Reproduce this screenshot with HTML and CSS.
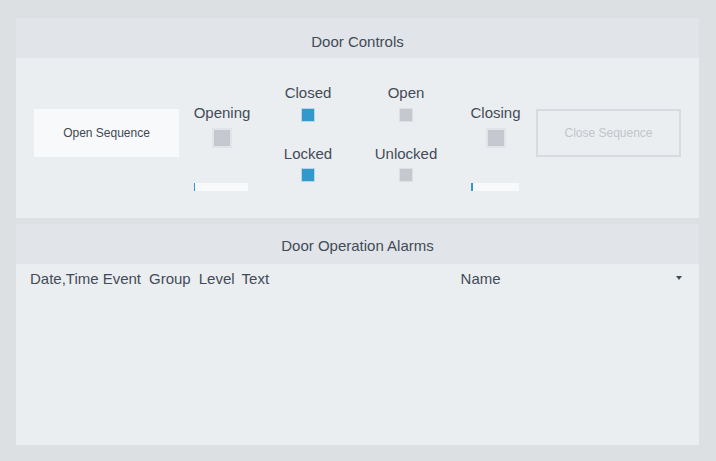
FILE: index.html
```html
<!DOCTYPE html>
<html lang="en">
<head>
<meta charset="utf-8">
<title>Door</title>
<link rel="stylesheet" href="styles.css">
</head>
<body>
<div class="page">
  <section class="panel">
    <div class="panel-header header-controls">Door Controls</div>
    <div class="controls">
      <button class="seq-btn">Open Sequence</button>
      <div class="motion motion-opening">
        <div class="label">Opening</div>
        <div class="lamp lamp-lg"></div>
        <div class="progress progress-opening"><div class="progress-fill" style="width:1px"></div></div>
      </div>
      <div class="status status-closed">
        <div class="label">Closed</div>
        <div class="lamp lamp-sm lamp-on"></div>
        <div class="label label-second">Locked</div>
        <div class="lamp lamp-sm lamp-on lamp-second"></div>
      </div>
      <div class="status status-open">
        <div class="label">Open</div>
        <div class="lamp lamp-sm"></div>
        <div class="label label-second">Unlocked</div>
        <div class="lamp lamp-sm lamp-second"></div>
      </div>
      <div class="motion motion-closing">
        <div class="label">Closing</div>
        <div class="lamp lamp-lg"></div>
        <div class="progress progress-closing"><div class="progress-fill" style="width:2px"></div></div>
      </div>
      <button class="seq-btn seq-btn-disabled" disabled>Close Sequence</button>
    </div>
  </section>
  <section class="panel panel-alarms">
    <div class="panel-header header-alarms">Door Operation Alarms</div>
    <div class="alarms">
      <div class="alarm-head">
        <span class="col col-date">Date,Time</span>
        <span class="col col-event">Event</span>
        <span class="col col-group">Group</span>
        <span class="col col-level">Level</span>
        <span class="col col-text">Text</span>
        <span class="col col-name">Name</span>
        <span class="caret"></span>
      </div>
    </div>
  </section>
</div>
</body>
</html>
```
FILE: styles.css
```css
html, body {
  margin: 0;
  padding: 0;
}
body {
  background: #dde0e3;
  font-family: "Liberation Sans", Arial, sans-serif;
  color: #434b57;
}
.page {
  padding: 18px 17px 16px 16px;
}
.panel {
  display: flex;
  flex-direction: column;
}
.panel-alarms {
  margin-top: 6px;
}
.panel-header {
  box-sizing: border-box;
  height: 40px;
  background: #e1e4e8;
  text-align: center;
  font-size: 15px;
  line-height: 17px;
}
.header-controls {
  padding-top: 15px;
}
.header-alarms {
  padding-top: 13px;
}
.controls {
  box-sizing: border-box;
  height: 160px;
  background: #ebeef1;
  display: flex;
  align-items: flex-start;
  padding-left: 18px;
}
.seq-btn {
  box-sizing: border-box;
  width: 145px;
  height: 48px;
  margin-top: 51px;
  background: #f7f9fb;
  border: 0;
  font-family: "Liberation Sans", Arial, sans-serif;
  font-size: 12px;
  color: #3f4752;
  padding: 0;
}
.seq-btn-disabled {
  margin-left: 16px;
  background: transparent;
  border: 2px solid #d7dade;
  color: #c2c5c9;
}
.label {
  font-size: 15px;
  line-height: 17px;
  white-space: nowrap;
}
.motion {
  display: flex;
  flex-direction: column;
  align-items: center;
  margin-top: 46px;
}
.motion-opening {
  margin-left: 15px;
  width: 56px;
}
.motion-closing {
  margin-left: 33px;
  width: 49px;
}
.lamp {
  box-sizing: border-box;
  background: #c5c9cf;
}
.lamp-lg {
  width: 20px;
  height: 20px;
  border: 2px solid #e1e4e8;
  margin-top: 7px;
}
.lamp-sm {
  width: 14px;
  height: 14px;
  border: 1px solid #dcdfe3;
  margin-top: 7px;
}
.lamp-on {
  background: #3399cc;
  border-color: #b9d6e8;
}
.lamp-second {
  margin-top: 6px;
}
.progress {
  align-self: flex-start;
  height: 8px;
  background: #f7f9fb;
  margin-top: 35px;
  display: flex;
}
.progress-opening {
  width: 54px;
}
.progress-closing {
  width: 48px;
}
.progress-fill {
  height: 100%;
  background: #3399cc;
}
.status {
  display: flex;
  flex-direction: column;
  align-items: center;
  margin-top: 26px;
}
.status-closed {
  margin-left: 28px;
  width: 60px;
}
.status-open {
  margin-left: 36px;
  width: 64px;
}
.label-second {
  margin-top: 23px;
}
.alarms {
  box-sizing: border-box;
  height: 181px;
  background: #ebeef1;
  padding: 6px 17px 0 14px;
}
.alarm-head {
  display: flex;
  align-items: flex-start;
  font-size: 15px;
  line-height: 17px;
}
.col {
  white-space: nowrap;
}
.col-event {
  margin-left: 4px;
}
.col-group {
  margin-left: 8px;
}
.col-level {
  margin-left: 8px;
}
.col-text {
  margin-left: 7px;
  width: 219px;
}
.col-name {
  flex: 1;
}
.caret {
  width: 0;
  height: 0;
  border-left: 3.5px solid transparent;
  border-right: 3.5px solid transparent;
  border-top: 4px solid #434b57;
  margin-top: 6px;
}
```
